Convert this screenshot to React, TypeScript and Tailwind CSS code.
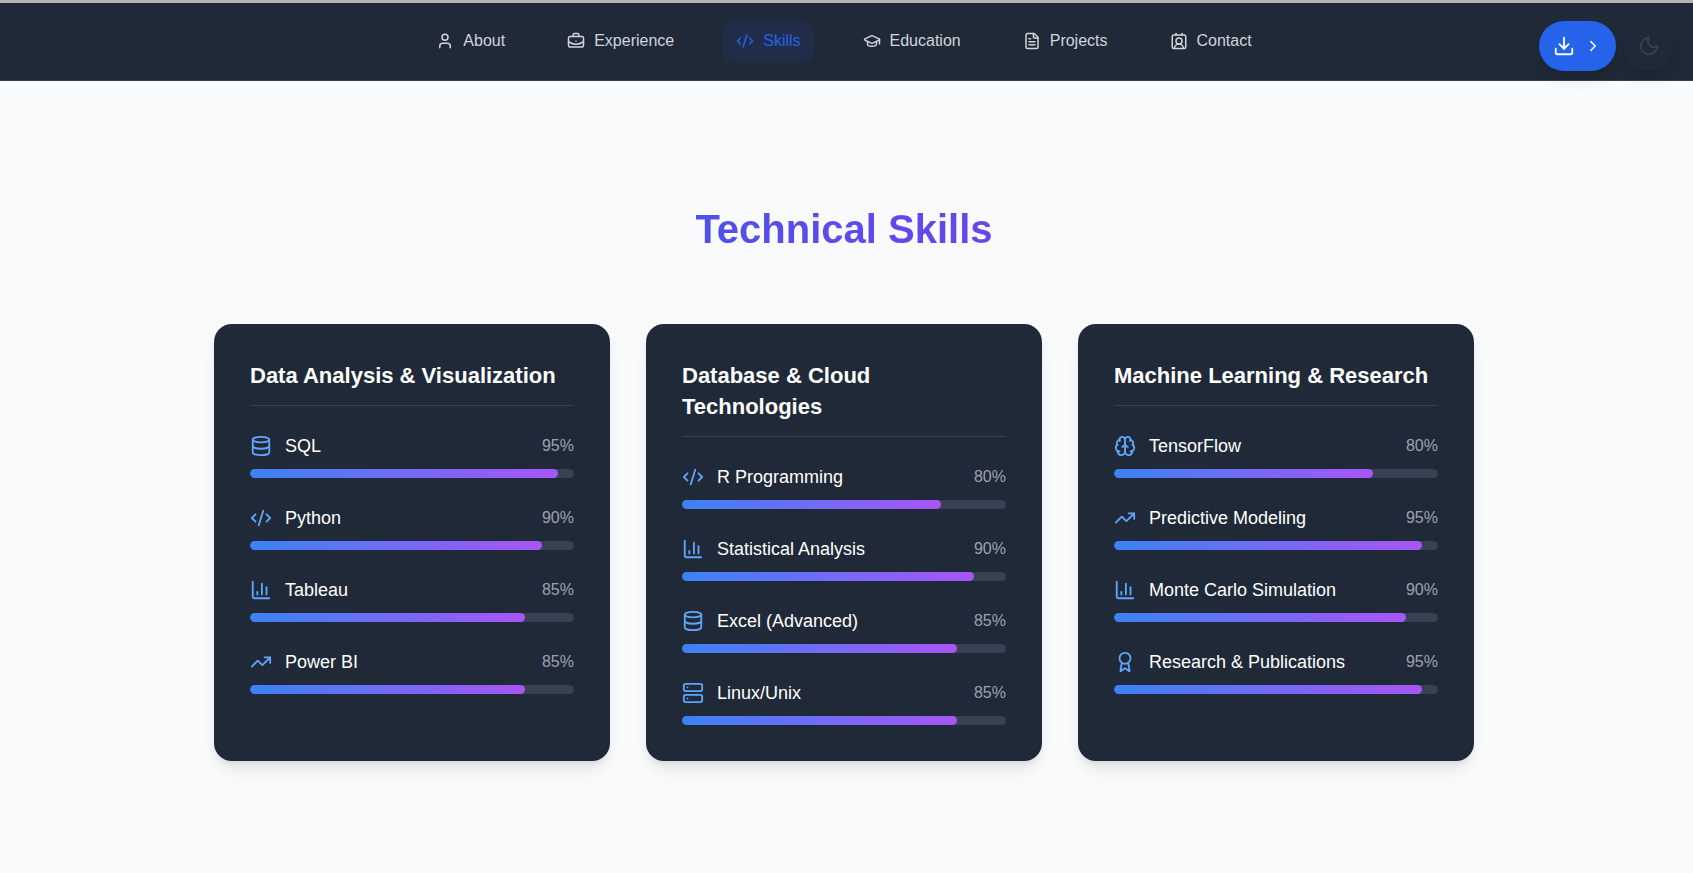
import React from "react";
import {
  Award,
  Brain,
  BriefcaseBusiness,
  ChartColumn,
  ChevronRight,
  CodeXml,
  ContactRound,
  Database,
  Download,
  FileText,
  GraduationCap,
  Moon,
  Server,
  TrendingUp,
  User,
  type LucideIcon,
} from "lucide-react";

interface NavItem {
  label: string;
  href: string;
  icon: LucideIcon;
}

interface Skill {
  name: string;
  level: number;
  icon: LucideIcon;
}

interface SkillGroup {
  title: string;
  skills: Skill[];
}

const navItems: NavItem[] = [
  { label: "About", href: "#about", icon: User },
  { label: "Experience", href: "#experience", icon: BriefcaseBusiness },
  { label: "Skills", href: "#skills", icon: CodeXml },
  { label: "Education", href: "#education", icon: GraduationCap },
  { label: "Projects", href: "#projects", icon: FileText },
  { label: "Contact", href: "#contact", icon: ContactRound },
];

const skillGroups: SkillGroup[] = [
  {
    title: "Data Analysis & Visualization",
    skills: [
      { name: "SQL", level: 95, icon: Database },
      { name: "Python", level: 90, icon: CodeXml },
      { name: "Tableau", level: 85, icon: ChartColumn },
      { name: "Power BI", level: 85, icon: TrendingUp },
    ],
  },
  {
    title: "Database & Cloud Technologies",
    skills: [
      { name: "R Programming", level: 80, icon: CodeXml },
      { name: "Statistical Analysis", level: 90, icon: ChartColumn },
      { name: "Excel (Advanced)", level: 85, icon: Database },
      { name: "Linux/Unix", level: 85, icon: Server },
    ],
  },
  {
    title: "Machine Learning & Research",
    skills: [
      { name: "TensorFlow", level: 80, icon: Brain },
      { name: "Predictive Modeling", level: 95, icon: TrendingUp },
      { name: "Monte Carlo Simulation", level: 90, icon: ChartColumn },
      { name: "Research & Publications", level: 95, icon: Award },
    ],
  },
];

function NavLink({ item, active }: { item: NavItem; active: boolean }) {
  const Icon = item.icon;
  const tone = active ? "bg-[#202d48] text-[#2563eb]" : "text-[#d1d5db]";
  return (
    <a
      href={item.href}
      aria-current={active ? "page" : undefined}
      className={`flex h-[41px] items-center gap-[9px] rounded-[9px] px-[13px] pb-[2px] text-base ${tone}`}
    >
      <Icon className="h-[18px] w-[18px]" aria-hidden="true" />
      <span>{item.label}</span>
    </a>
  );
}

function Header() {
  return (
    <header className="relative z-10 grid grid-cols-[1fr_auto_1fr] items-start border-b border-[#374151] bg-[#1f2937] pt-[18px] pr-[19px] pb-[9px] pl-[14px]">
      <span />
      <nav aria-label="Main" className="flex gap-9">
        {navItems.map((item) => (
          <NavLink key={item.label} item={item} active={item.label === "Skills"} />
        ))}
      </nav>
      <div className="flex justify-end gap-2">
        <button
          type="button"
          aria-label="Download"
          className="flex h-[50px] items-center gap-[9px] rounded-full bg-[#2563eb] px-[14px] text-white shadow-lg"
        >
          <Download className="h-[22px] w-[22px]" />
          <ChevronRight className="h-[18px] w-[18px]" />
        </button>
        <button
          type="button"
          aria-label="Toggle dark mode"
          className="flex h-[50px] w-[50px] items-center justify-center rounded-full bg-[#1f2937] text-[#374151] shadow-lg"
        >
          <Moon className="h-[22px] w-[22px]" />
        </button>
      </div>
    </header>
  );
}

function SkillRow({ skill }: { skill: Skill }) {
  const Icon = skill.icon;
  return (
    <li>
      <div className="mb-[10px] flex h-[26px] items-center justify-between">
        <div className="flex items-center gap-[13px]">
          <Icon className="h-[22px] w-[22px] text-[#60a5fa]" aria-hidden="true" />
          <span className="text-lg/[26px] text-white">{skill.name}</span>
        </div>
        <span className="text-base/[26px] text-[#9ca3af]">{skill.level}%</span>
      </div>
      <div
        role="progressbar"
        aria-label={skill.name}
        aria-valuenow={skill.level}
        aria-valuemin={0}
        aria-valuemax={100}
        className="h-[9px] overflow-hidden rounded-full bg-[#374151]"
      >
        <div
          className="h-full rounded-full bg-linear-to-r/srgb from-[#3b82f6] to-[#a855f7]"
          style={{ width: `${skill.level}%` }}
        />
      </div>
    </li>
  );
}

function SkillCard({ group }: { group: SkillGroup }) {
  return (
    <section className="rounded-[18px] bg-[#1f2937] p-9 shadow-lg">
      <h3 className="mb-[27px] border-b border-[#374151] pb-[14px] text-[22px]/[31px] font-bold text-white">
        {group.title}
      </h3>
      <ul className="flex flex-col gap-[27px]">
        {group.skills.map((skill) => (
          <SkillRow key={skill.name} skill={skill} />
        ))}
      </ul>
    </section>
  );
}

export default function App() {
  return (
    <div className="min-h-screen border-t-3 border-[#b4b4b4] bg-[#f9fafc] font-['Liberation_Sans',Arial,sans-serif]">
      <Header />
      <main id="skills" className="pt-[117px] pr-[23px] pb-[112px] pl-[18px]">
        <div className="mx-auto max-w-[1260px]">
          <h2 className="mb-[63px] bg-linear-to-r/srgb from-[#2563eb] to-[#9333ea] bg-clip-text text-center text-[40px]/[63px] font-bold text-transparent">
            Technical Skills
          </h2>
          <div className="grid grid-cols-1 gap-9 md:grid-cols-2 lg:grid-cols-3">
            {skillGroups.map((group) => (
              <SkillCard key={group.title} group={group} />
            ))}
          </div>
        </div>
      </main>
    </div>
  );
}
